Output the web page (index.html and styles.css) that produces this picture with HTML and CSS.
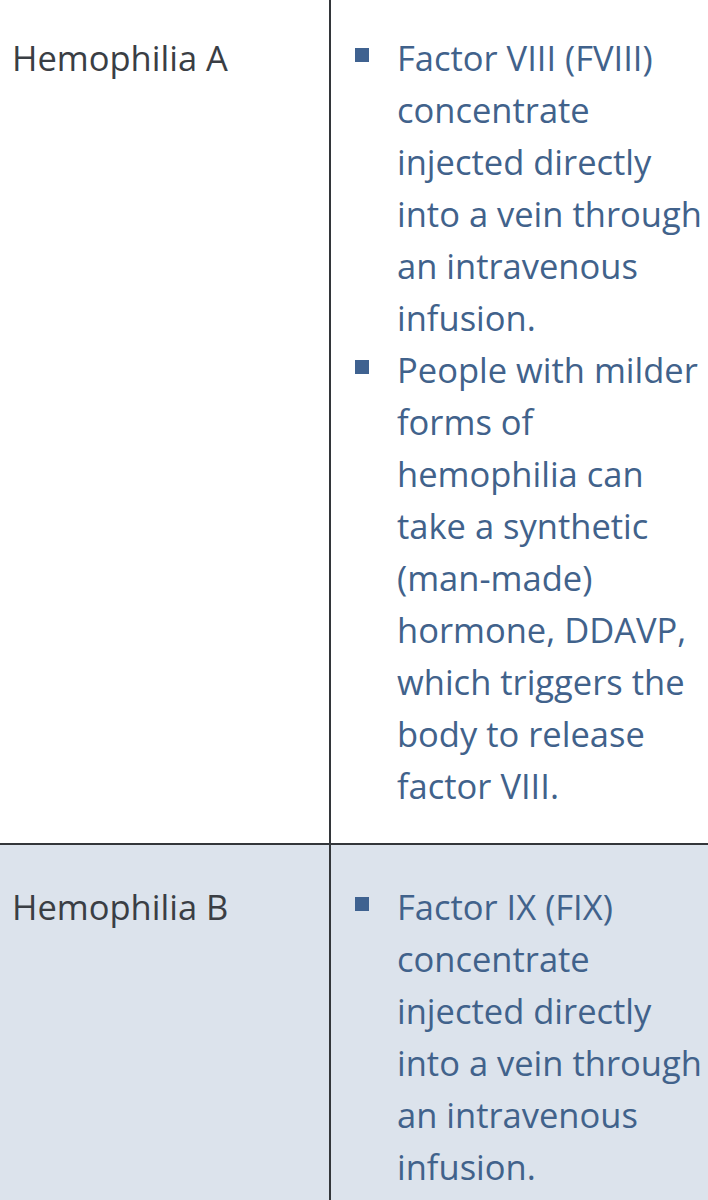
FILE: index.html
```html
<!DOCTYPE html>
<html>
<head>
<meta charset="utf-8">
<link rel="stylesheet" href="styles.css">
</head>
<body>
<div class="table">
  <div class="row row-first">
    <div class="cell cell-name">Hemophilia A</div>
    <div class="cell cell-treat">
      <ul class="list">
        <li>Factor VIII (FVIII) concentrate injected directly into a vein through an intravenous infusion.</li>
        <li>People with milder forms of hemophilia can take a synthetic (man-made) hormone, DDAVP, which triggers the body to release factor VIII.</li>
      </ul>
    </div>
  </div>
  <div class="row row-alt">
    <div class="cell cell-name">Hemophilia B</div>
    <div class="cell cell-treat">
      <ul class="list">
        <li>Factor IX (FIX) concentrate injected directly into a vein through an intravenous infusion.</li>
      </ul>
    </div>
  </div>
</div>
</body>
</html>
```
FILE: styles.css
```css
html, body {
  margin: 0;
  padding: 0;
  background: #fff;
  overflow: hidden;
}
body {
  font-family: "Open Sans", "Noto Sans", sans-serif;
  font-size: 34.5px;
  line-height: 52px;
}
.table {
  width: 740px;
}
.row {
  display: grid;
  grid-template-columns: 331px 1fr;
  border-bottom: 2px solid #33363a;
}
.row-alt {
  background: #dce3ec;
}
.cell-name {
  color: #3a3e44;
  padding: 32px 12px 31px 12px;
  border-right: 2px solid #33363a;
}
.row-alt .cell-name,
.row-alt .cell-treat {
  padding-top: 36px;
}
.cell-treat {
  padding: 32px 0 31px 24px;
  color: #41628b;
}
.list {
  list-style: none;
  margin: 0;
  padding: 0;
  width: 352px;
}
.list li {
  display: flex;
}
.list li::before {
  content: "";
  flex: none;
  width: 14px;
  height: 14px;
  margin-top: 16px;
  margin-right: 28px;
  background: #3f6290;
}
```
